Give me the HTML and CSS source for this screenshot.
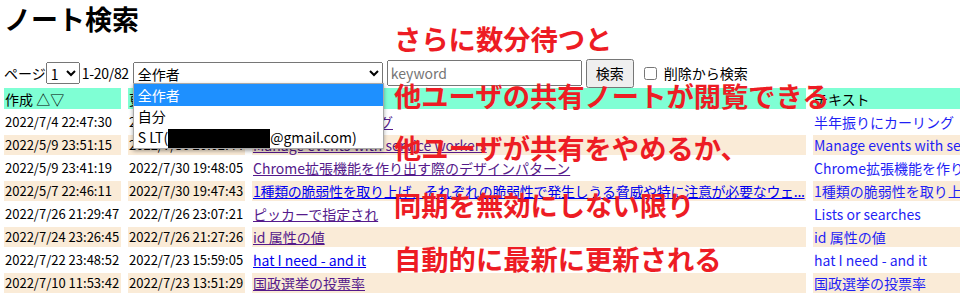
FILE: index.html
```html
<!DOCTYPE html>
<html lang="ja">
<head>
    <meta charset="UTF-8">
    <meta name="viewport" content="width=device-width, initial-scale=1.0">
    <title>ノート検索</title>
    <link rel="stylesheet" href="styles.css">
</head>
<body>
    <h1 class="page-title">ノート検索</h1>

    <div class="search-bar">
        <span class="label">ページ</span>
        <select class="page-select"><option>1</option></select>
        <span class="range">1-20/82</span>
        <div class="author">
            <select class="author-select"><option>全作者</option></select>
            <ul class="author-list">
                <li class="selected">全作者</li>
                <li>自分</li>
                <li>S LT(<span class="redacted"></span>@gmail.com)</li>
            </ul>
        </div>
        <input type="text" class="keyword" placeholder="keyword">
        <button class="search-btn">検索</button>
        <label class="trash"><input type="checkbox">削除から検索</label>
    </div>

    <table class="notes">
        <colgroup>
            <col class="c-date">
            <col class="c-date">
            <col class="c-title">
            <col class="c-text">
        </colgroup>
        <tr class="head">
            <th>作成 △▽</th>
            <th>更新 △▽</th>
            <th>タイトル △▽</th>
            <th>テキスト</th>
        </tr>
        <tr>
            <td class="date">2022/7/4 22:47:30</td>
            <td class="date">2022/7/31 10:12:08</td>
            <td><a href="#" class="seen">半年振りにカーリング</a></td>
            <td class="body">半年振りにカーリング</td>
        </tr>
        <tr class="alt">
            <td class="date">2022/5/9 23:51:15</td>
            <td class="date">2022/7/30 20:02:44</td>
            <td><a href="#" class="seen">Manage events with service workers</a></td>
            <td class="body">Manage events with service workers</td>
        </tr>
        <tr>
            <td class="date">2022/5/9 23:41:19</td>
            <td class="date">2022/7/30 19:48:05</td>
            <td><a href="#" class="seen">Chrome拡張機能を作り出す際のデザインパターン</a></td>
            <td class="body">Chrome拡張機能を作り出す際のデザインパターン</td>
        </tr>
        <tr class="alt">
            <td class="date">2022/5/7 22:46:11</td>
            <td class="date">2022/7/30 19:47:43</td>
            <td><a href="#" class="long">1種類の脆弱性を取り上げ、それぞれの脆弱性で発生しうる脅威や特に注意が必要なウェ...</a></td>
            <td class="body">1種類の脆弱性を取り上げ、それぞれの脆弱性で発生しうる脅威</td>
        </tr>
        <tr>
            <td class="date">2022/7/26 21:29:47</td>
            <td class="date">2022/7/26 23:07:21</td>
            <td><a href="#" class="seen">ピッカーで指定され</a></td>
            <td class="body">Lists or searches</td>
        </tr>
        <tr class="alt">
            <td class="date">2022/7/24 23:26:45</td>
            <td class="date">2022/7/26 21:27:26</td>
            <td><a href="#" class="seen">id 属性の値</a></td>
            <td class="body">id 属性の値</td>
        </tr>
        <tr>
            <td class="date">2022/7/22 23:48:52</td>
            <td class="date">2022/7/23 15:59:05</td>
            <td><a href="#">hat I need - and it</a></td>
            <td class="body">hat I need - and it</td>
        </tr>
        <tr class="alt">
            <td class="date">2022/7/10 11:53:42</td>
            <td class="date">2022/7/23 13:51:29</td>
            <td><a href="#" class="seen">国政選挙の投票率</a></td>
            <td class="body">国政選挙の投票率</td>
        </tr>
    </table>

    <!-- 注釈 -->
    <p class="memo memo-1">さらに数分待つと</p>
    <p class="memo memo-2">他ユーザの共有ノートが閲覧できる</p>
    <p class="memo memo-3">他ユーザが共有をやめるか、</p>
    <p class="memo memo-4">同期を無効にしない限り</p>
    <p class="memo memo-5">自動的に最新に更新される</p>
</body>
</html>
```

FILE: styles.css
```css
html, body {
    overflow: hidden;
}

body {
    margin: 0;
    padding: 0 4px;
    position: relative;
    font-family: "Noto Sans CJK JP", sans-serif;
    font-size: 14px;
    color: #000;
}

.page-title {
    margin: 0 0 20px;
    font-size: 27px;
    line-height: 38px;
    font-weight: bold;
}

.search-bar {
    display: flex;
    align-items: center;
    height: 30px;
    white-space: nowrap;
}

select, input, button {
    font-family: inherit;
    font-size: 14px;
}

.page-select {
    width: 34px;
    height: 22px;
    margin-right: 2px;
}

.range {
    letter-spacing: -0.3px;
}

.author {
    position: relative;
    margin-left: 4px;
}

.author-select {
    display: block;
    width: 250px;
    height: 22px;
}

.author-list {
    position: absolute;
    top: 21px;
    left: 0;
    width: 251px;
    margin: 0;
    padding: 0;
    list-style: none;
    background: #fff;
    border: 1px solid #a9a9a9;
    box-sizing: border-box;
    box-shadow: 0 2px 4px rgba(0, 0, 0, 0.35);
    z-index: 2;
}

.author-list li {
    height: 21px;
    line-height: 21px;
    padding-left: 4px;
}

.author-list li.selected {
    height: 22px;
    line-height: 22px;
    background: #1e90ff;
    color: #fff;
}

.redacted {
    display: inline-block;
    width: 102px;
    height: 19px;
    background: #000;
    vertical-align: -5px;
}

.keyword {
    width: 195px;
    height: 26px;
    margin-left: 4px;
    box-sizing: border-box;
}

.search-btn {
    width: 48px;
    height: 29px;
    margin-left: 4px;
    padding: 0;
}

.trash {
    display: flex;
    align-items: center;
}

.trash input {
    width: 13px;
    height: 13px;
    margin: 0 7px 0 10px;
}

.notes {
    margin: -3px 0 0 -7px;
    border-spacing: 7px 3px;
    table-layout: fixed;
    width: 1123px;
}

.c-date {
    width: 117px;
}

.c-title {
    width: 554px;
}

.c-text {
    width: 300px;
}

.notes th, .notes td {
    padding: 0 0 0 1px;
    height: 20px;
    line-height: 20px;
    text-align: left;
    font-weight: normal;
    white-space: nowrap;
    overflow: hidden;
}

.notes td.date {
    font-size: 13px;
}

.notes .head th {
    height: 21px;
    background: #7fffd4;
}

.notes .alt td {
    background: #faebd7;
}

.notes a {
    color: #0000ee;
}

.notes a.seen {
    color: #551a8b;
}

.notes a.long {
    letter-spacing: -0.3px;
}

.notes .body {
    color: #1f1ff5;
}

.memo {
    position: absolute;
    left: 394px;
    margin: 0;
    font-size: 27.3px;
    font-weight: bold;
    line-height: 30px;
    color: #ed1c24;
    white-space: nowrap;
    z-index: 3;
}

.memo-1 { top: 23px; }
.memo-2 { top: 80px; }
.memo-3 { top: 132px; }
.memo-4 { top: 189px; }
.memo-5 { top: 243px; }
```
